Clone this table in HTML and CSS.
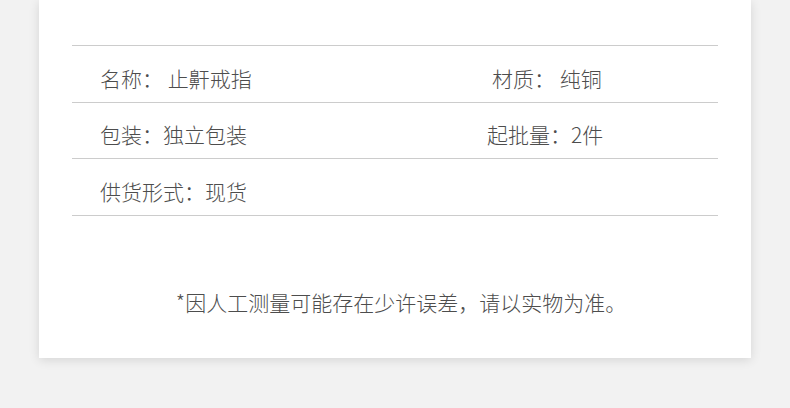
FILE: index.html
```html
<!DOCTYPE html>
<html lang="zh-CN">
<head>
<meta charset="utf-8">
<link rel="stylesheet" href="styles.css">
</head>
<body>
<div class="card">
  <div class="table">
    <div class="row">
      <div class="cell left">名称： 止鼾戒指</div>
      <div class="cell right r1">材质： 纯铜</div>
    </div>
    <div class="row">
      <div class="cell left">包装：独立包装</div>
      <div class="cell right r2">起批量：2件</div>
    </div>
    <div class="row">
      <div class="cell left">供货形式：现货</div>
      <div class="cell right"></div>
    </div>
  </div>
  <p class="note">*因人工测量可能存在少许误差，请以实物为准。</p>
</div>
</body>
</html>
```
FILE: styles.css
```css
html, body {
  margin: 0;
  padding: 0;
}
body {
  background: #f2f2f2;
  width: 790px;
  height: 408px;
  overflow: hidden;
  font-family: "Noto Sans CJK SC", "Noto Sans", sans-serif;
}
.card {
  margin-left: 39px;
  width: 712px;
  background: #fff;
  box-shadow: 0 2px 10px rgba(0, 0, 0, 0.12);
  padding: 45px 0 41px;
  box-sizing: border-box;
}
.table {
  margin: 0 33px 0 33px;
  border-top: 1px solid #cccccc;
}
.row {
  display: flex;
  height: 57px;
  border-bottom: 1px solid #cccccc;
  align-items: center;
  padding-top: 7px;
  box-sizing: border-box;
}
.row:nth-child(2) {
  height: 56px;
}
.cell {
  font-size: 21px;
  font-weight: 300;
  color: #4d4d4d;
  line-height: 30px;
  white-space: pre;
}
.left {
  width: 387px;
  padding-left: 28px;
  box-sizing: border-box;
}
.r1 {
  padding-left: 33px;
}
.r2 {
  padding-left: 28px;
}
.note {
  margin: 71px 0 0;
  padding-left: 12px;
  text-align: center;
  font-size: 21px;
  font-weight: 300;
  line-height: 30px;
  color: #4d4d4d;
}
```
